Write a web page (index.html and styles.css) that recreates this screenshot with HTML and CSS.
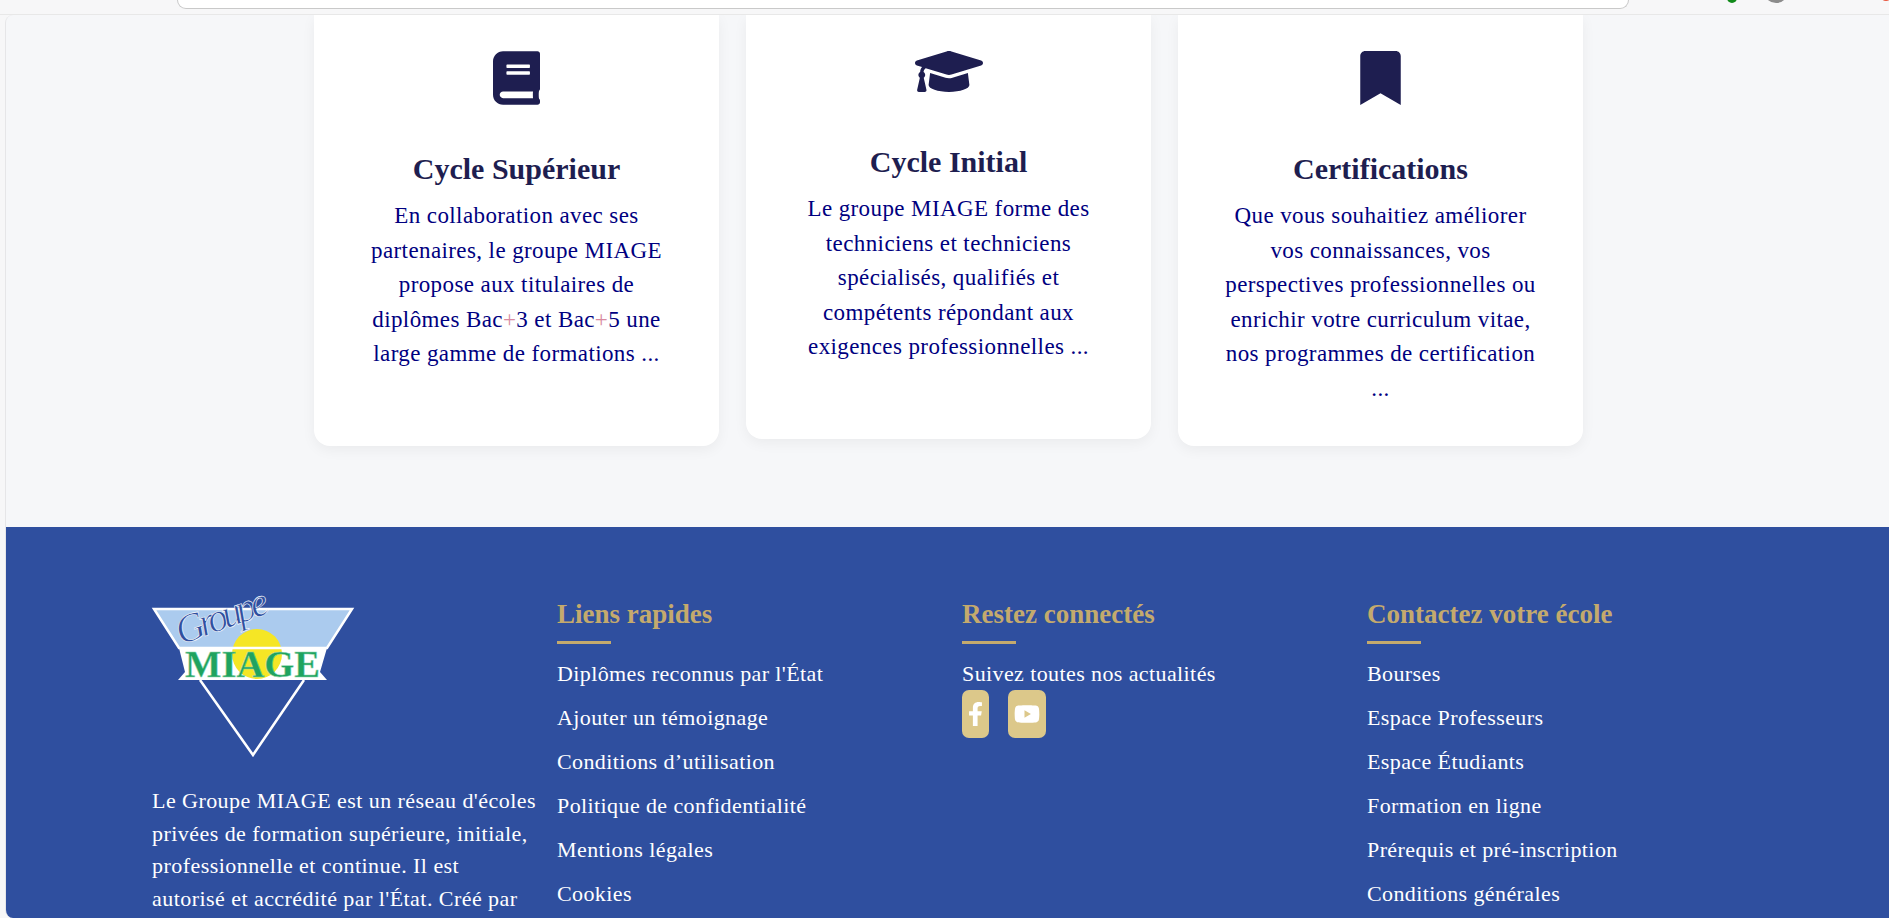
FILE: index.html
```html
<!DOCTYPE html>
<html lang="fr">
  <head>
    <meta charset="UTF-8" />
    <title>Groupe MIAGE</title>
    <link rel="stylesheet" href="styles.css">
  </head>
  <body>
    <div class="browser-bar">
      <div class="address-bar"></div>
      <span class="dot dot-green"></span>
      <span class="dot dot-grey"></span>
      <span class="dot dot-red"></span>
    </div>

    <div class="page">
      <section class="cycles">
        <article class="card">
          <svg class="card-icon icon-book" viewBox="0 0 448 512"><path d="M448 360V24c0-13.3-10.7-24-24-24H96C43 0 0 43 0 96v320c0 53 43 96 96 96h328c13.3 0 24-10.7 24-24v-16c0-7.5-3.5-14.3-8.9-18.7-4.2-15.4-4.2-59.3 0-74.7 5.4-4.3 8.9-11.1 8.9-18.6zM128 134c0-3.3 2.7-6 6-6h212c3.3 0 6 2.7 6 6v20c0 3.3-2.7 6-6 6H134c-3.3 0-6-2.7-6-6v-20zm0 64c0-3.3 2.7-6 6-6h212c3.3 0 6 2.7 6 6v20c0 3.3-2.7 6-6 6H134c-3.3 0-6-2.7-6-6v-20zm253.4 250H96c-17.7 0-32-14.3-32-32 0-17.6 14.4-32 32-32h285.4c-1.9 17.1-1.9 46.9 0 64z"/></svg>
          <h2 class="card-title">Cycle Supérieur</h2>
          <p class="card-text">En collaboration avec ses<br>partenaires, le groupe MIAGE<br>propose aux titulaires de<br>diplômes Bac<span class="plus">+</span>3 et Bac<span class="plus">+</span>5 une<br>large gamme de formations ...</p>
        </article>
        <article class="card">
          <svg class="card-icon icon-cap" viewBox="0 64 640 384"><path d="M622.34 153.2L343.4 67.5c-15.2-4.67-31.6-4.67-46.79 0L17.66 153.2c-23.54 7.23-23.54 38.36 0 45.59l48.63 14.94c-10.67 13.19-17.23 29.28-17.88 46.9C38.78 266.15 32 276.11 32 288c0 10.78 5.68 19.85 13.86 25.65L20.33 428.53C18.11 438.52 25.71 448 35.94 448h56.11c10.24 0 17.84-9.48 15.62-19.47L82.14 313.65C90.32 307.85 96 298.78 96 288c0-11.57-6.47-21.25-15.66-26.87.76-15.02 8.44-28.3 20.69-36.72L296.6 284.5c9.06 2.78 26.44 6.25 46.79 0l278.95-85.7c23.55-7.24 23.55-38.36 0-45.6zM352.79 315.09c-28.53 8.76-52.84 3.92-65.59 0l-145.02-44.55L128 384c0 35.35 85.96 64 192 64s192-28.65 192-64l-14.18-113.47-145.03 44.56z"/></svg>
          <h2 class="card-title">Cycle Initial</h2>
          <p class="card-text">Le groupe MIAGE forme des<br>techniciens et techniciens<br>spécialisés, qualifiés et<br>compétents répondant aux<br>exigences professionnelles ...</p>
        </article>
        <article class="card">
          <svg class="card-icon icon-bookmark" viewBox="0 0 384 512"><path d="M0 512V48C0 21.49 21.49 0 48 0h288c26.51 0 48 21.49 48 48v464L192 400 0 512z"/></svg>
          <h2 class="card-title">Certifications</h2>
          <p class="card-text">Que vous souhaitiez améliorer<br>vos connaissances, vos<br>perspectives professionnelles ou<br>enrichir votre curriculum vitae,<br>nos programmes de certification<br>...</p>
        </article>
      </section>

      <footer class="footer">
        <div class="footer-col">
          <svg class="logo" viewBox="0 0 204 152">
            <polygon points="2,5 200,5 175,44 27,44" fill="#abcbee"/>
            <path d="M27 44H175L168 68L175 76H26L33 68Z" fill="#fff"/>
            <circle cx="105" cy="50" r="25" fill="#f5e625"/>
            <polygon points="2,5 200,5 175,44 27,44" fill="none" stroke="#fff" stroke-width="2.5"/>
            <path d="M48 76L101 151L152 76" fill="none" stroke="#fff" stroke-width="2.5"/>
            <text class="logo-groupe" x="29" y="41" textLength="96" transform="rotate(-20 29 41)">Groupe</text>
            <text class="logo-miage" x="33" y="73" textLength="135" lengthAdjust="spacingAndGlyphs">MIAGE</text>
          </svg>
          <p class="footer-about">Le Groupe MIAGE est un réseau d'écoles<br>privées de formation supérieure, initiale,<br>professionnelle et continue. Il est<br>autorisé et accrédité par l'État. Créé par</p>
        </div>

        <div class="footer-col">
          <h3 class="footer-title">Liens rapides</h3>
          <ul class="footer-links">
            <li>Diplômes reconnus par l'État</li>
            <li>Ajouter un témoignage</li>
            <li>Conditions d’utilisation</li>
            <li>Politique de confidentialité</li>
            <li>Mentions légales</li>
            <li>Cookies</li>
          </ul>
        </div>

        <div class="footer-col">
          <h3 class="footer-title">Restez connectés</h3>
          <p class="footer-follow">Suivez toutes nos actualités</p>
          <div class="socials">
            <a class="social"><svg class="icon-fb" viewBox="0 0 320 512"><path d="M279.14 288l14.22-92.66h-88.91v-60.13c0-25.35 12.42-50.06 52.24-50.06h40.42V6.26S260.43 0 225.36 0c-73.22 0-121.08 44.38-121.08 124.72v70.62H22.89V288h81.39v224h100.17V288z"/></svg></a>
            <a class="social"><svg class="icon-yt" viewBox="0 64 576 384"><path d="M549.655 124.083c-6.281-23.65-24.787-42.276-48.284-48.597C458.781 64 288 64 288 64S117.22 64 74.629 75.486c-23.497 6.322-42.003 24.947-48.284 48.597-11.412 42.867-11.412 132.305-11.412 132.305s0 89.438 11.412 132.305c6.281 23.65 24.787 41.5 48.284 47.821C117.22 448 288 448 288 448s170.78 0 213.371-11.486c23.497-6.321 42.003-24.171 48.284-47.821 11.412-42.867 11.412-132.305 11.412-132.305s0-89.438-11.412-132.305zm-317.51 213.508V175.185l142.739 81.205-142.739 81.201z"/></svg></a>
          </div>
        </div>

        <div class="footer-col">
          <h3 class="footer-title">Contactez votre école</h3>
          <ul class="footer-links">
            <li>Bourses</li>
            <li>Espace Professeurs</li>
            <li>Espace Étudiants</li>
            <li>Formation en ligne</li>
            <li>Prérequis et pré-inscription</li>
            <li>Conditions générales</li>
          </ul>
        </div>
      </footer>
    </div>
  </body>
</html>
```

FILE: styles.css
```css
* {
  box-sizing: border-box;
}
html,
body {
  height: 100%;
}
body {
  margin: 0;
  overflow: hidden;
  background-color: #f7f7f8;
  font-family: "Liberation Serif", serif;
  display: flex;
  flex-direction: column;
}

/* browser strip at the top of the capture */
.browser-bar {
  position: relative;
  height: 15px;
  flex: none;
  border-bottom: 1px solid #e8e8e8;
  overflow: hidden;
}
.address-bar {
  width: 1452px;
  height: 9px;
  margin-left: 177px;
  background: white;
  border: 1px solid #c9c9c9;
  border-top: 0;
  border-radius: 0 0 20px 20px;
}
.dot {
  position: absolute;
  border-radius: 50%;
}
.dot-green {
  left: 1727px;
  top: -7px;
  width: 10px;
  height: 10px;
  background: #118a1a;
}
.dot-grey {
  left: 1764px;
  top: -20px;
  width: 24px;
  height: 23px;
  background: #8c8c8c;
}
.dot-red {
  left: 1881px;
  top: -7px;
  width: 10px;
  height: 8px;
  background: #e8563e;
}

.page {
  flex: 1;
  min-height: 0;
  margin-left: 5px;
  background-color: #f6f7f9;
  border-left: 1px solid #e6e6e8;
  border-radius: 8px 0 0 8px;
  overflow: hidden;
  display: flex;
  flex-direction: column;
}

/* cards */
.cycles {
  height: 512px;
  flex: none;
  padding-left: 2px;
  display: flex;
  justify-content: center;
  align-items: flex-start;
  gap: 27px;
}
.card {
  width: 405px;
  padding: 36px 20px 0;
  background: white;
  border-radius: 0 0 16px 16px;
  box-shadow: 0 4px 14px rgba(0, 0, 0, 0.05);
  text-align: center;
}
.card:nth-child(1) {
  height: 431px;
}
.card:nth-child(2) {
  height: 424px;
}
.card:nth-child(3) {
  height: 431px;
}
.card-icon {
  display: block;
  margin: 0 auto;
  fill: #1e1e50;
}
.icon-book {
  width: 47px;
  height: 54px;
}
.icon-cap {
  width: 68px;
  height: 41px;
  margin-bottom: 6px;
}
.card:nth-child(2) .card-title {
  margin-top: 50px;
}
.icon-bookmark {
  width: 41px;
  height: 54px;
}
.card-title {
  margin: 44px 0 10px;
  color: #1e1e50;
  font-size: 30px;
  line-height: 40px;
  font-weight: bold;
}
.card-text {
  margin: 0;
  color: #000080;
  font-size: 23px;
  line-height: 34.6px;
  letter-spacing: 0.4px;
}
.plus {
  color: #d98aa0;
}

/* footer */
.footer {
  flex: 1;
  padding: 70px 0 0 146px;
  background-color: #2f4f9f;
  color: white;
  display: grid;
  grid-template-columns: repeat(4, 405px);
  align-items: start;
}
.footer-col {
  min-width: 0;
}
.logo {
  display: block;
  width: 204px;
  height: 152px;
  margin: 7px 0 0;
  overflow: visible;
}
.logo-groupe {
  fill: #2f4f9f;
  stroke: white;
  stroke-width: 0.6px;
  font-family: "Liberation Serif", serif;
  font-style: italic;
  font-size: 40px;
}
.logo-miage {
  fill: #1fa35f;
  stroke: #8fd6ae;
  stroke-width: 0.5px;
  font-family: "Liberation Serif", serif;
  font-weight: bold;
  font-size: 38px;
}
.footer-about {
  margin: 29px 0 0;
  font-size: 22px;
  line-height: 32.7px;
  letter-spacing: 0.45px;
}
.footer-title {
  position: relative;
  margin: 0 0 16px;
  padding-bottom: 13px;
  color: #c4aa6d;
  font-size: 27px;
  line-height: 34px;
  font-weight: bold;
}
.footer-title::after {
  content: "";
  position: absolute;
  left: 0;
  bottom: 0;
  width: 54px;
  height: 3px;
  background: #c4aa6d;
}
.footer-links {
  margin: 0;
  padding: 0;
  list-style: none;
}
.footer-links li {
  height: 44px;
  font-size: 22px;
  line-height: 28px;
  letter-spacing: 0.4px;
}
.footer-follow {
  margin: 0;
  font-size: 22px;
  line-height: 28px;
  letter-spacing: 0.4px;
}
.socials {
  display: flex;
  gap: 19px;
  margin-top: 2px;
}
.social {
  height: 48px;
  padding: 0 6px;
  display: flex;
  align-items: center;
  background: #dcc88a;
  border-radius: 7px;
}
.social svg {
  display: block;
  fill: white;
}
.icon-fb {
  width: 15px;
  height: 24px;
}
.icon-yt {
  width: 26px;
  height: 18px;
}
```
